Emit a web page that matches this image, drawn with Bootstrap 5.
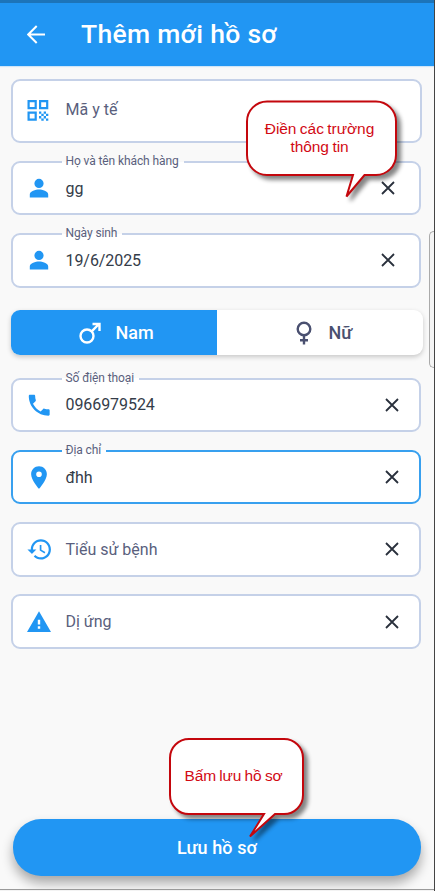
<!DOCTYPE html>
<html lang="vi">
<head>
<meta charset="utf-8">
<meta name="viewport" content="width=device-width, initial-scale=1">
<title>Thêm mới hồ sơ</title>
<link rel="stylesheet" href="https://cdn.jsdelivr.net/npm/bootstrap@5.3.0/dist/css/bootstrap.min.css">
<style>
:root{--blue:#2196f3;--line:#c5d1e8;--page:#f9f9f9;--muted-ink:#5a5f7d;--ink:#343c49}
body{font-family:Roboto,"Noto Sans",sans-serif;background:var(--page);margin:0}
.screen{width:435px;height:891px;border-right:1px solid #444;background:var(--page)}
.app-header{height:66px;background:var(--blue);border-top:3px solid #1c74b9;padding:0 0 1px 27px;box-shadow:0 1px 1px #cfe5f8}
.app-title{font-size:26.5px;font-weight:500;line-height:1;letter-spacing:.3px;margin-left:35px}
.form-area{padding:13px 14px 0 11px}
.field{height:54.5px;border:2px solid var(--line);border-radius:9px;background:#fff;margin-bottom:17.8px;padding-left:13.5px;padding-right:20px;width:409.5px;color:var(--ink);font-size:16px;letter-spacing:-.07px;line-height:20px}
.field span{padding-top:1px}
.field-code{height:64px;width:410.5px;padding-left:12.5px;padding-bottom:3px}
.field-code .field-icon{margin-right:16px}
.field-active{border-color:#38a0ef}
.field-empty{color:var(--muted-ink);letter-spacing:0}
.field-near{padding-right:24px}
.field-icon{width:24px;height:24px;fill:var(--blue);flex:none;margin-right:15px}
.field-label{position:absolute;left:48.5px;top:-9px;padding:0 5px 0 4px;font-size:12px;line-height:15px;letter-spacing:-.1px;color:var(--muted-ink);background:linear-gradient(var(--page) 50%,#fff 50%);white-space:nowrap}
.clear{width:14px;height:14px;stroke:#29303c;stroke-width:1.8;fill:none}
.gender{width:412px;height:45px;border-radius:9px;box-shadow:0 2px 5px rgba(0,0,0,.2);margin:22.5px 0;font-size:18px;font-weight:500;letter-spacing:0;background:#fff;color:#4a5070;overflow:hidden}
.gender-on{background:var(--blue);color:#fff}
.gender-half{width:206px;padding-left:3px}
.gender-half svg{width:26px;height:26px;fill:none;stroke:currentColor;stroke-width:2.4}
.save{position:absolute;left:13px;top:819px;width:408px;height:57px;border-radius:28px;background:var(--blue);color:#fff;font-size:18px;font-weight:500;letter-spacing:.1px;box-shadow:0 7px 12px rgba(0,0,0,.33)}
.save:hover{background:var(--blue);color:#fff}
.screen-foot{left:0;top:889px;width:435px;height:2px;background:#f3f3f3;border-top:1px solid #9a9a9a}
.side-tab{left:429px;top:231px;width:5px;height:137px;border:1px solid #aaa;border-right:0;border-radius:5px 0 0 5px;background:#f4f4f4}
.callout{color:#d20a14;font-family:"Liberation Sans",Arial,sans-serif;font-size:15.5px;line-height:18px;text-align:center;letter-spacing:-.05px;word-spacing:-.8px}
.callout svg{position:absolute;left:0;top:0;overflow:visible;fill:#fff;stroke:#c4070d;stroke-width:2;filter:drop-shadow(4px 4px 2px rgba(0,0,0,.48))}
.callout-fill{left:246px;top:100px;width:151px;height:98px;padding-top:20px;padding-right:4px}
.callout-save{left:169px;top:738px;width:135px;height:102px;padding-top:29px;padding-right:6px;letter-spacing:-.15px}
</style>
<script src="https://cdn.jsdelivr.net/npm/bootstrap@5.3.0/dist/js/bootstrap.bundle.min.js"></script>
</head>
<body>
<svg class="d-none">
<symbol id="person" viewBox="0 0 24 24"><path d="M12 12a4.6 4.6 0 1 0 0-9.2 4.6 4.6 0 0 0 0 9.2zm0 1.6c-3.3 0-9.2 1.6-9.2 4.8v3h18.4v-3c0-3.200-5.900-4.800-9.200-4.800z"/></symbol>
<symbol id="cross" viewBox="0 0 14 14"><path d="M1 1l12 12M13 1L1 13"/></symbol>
</svg>
<main class="screen position-relative overflow-hidden">
<header class="app-header d-flex align-items-center text-white">
<svg width="19" height="19" viewBox="0 0 19 19" fill="none" stroke="#fff" stroke-width="2"><path d="M18 9.500H1.500M9.700 1L1.200 9.500l8.500 8.500"/></svg>
<h1 class="app-title mb-0">Thêm mới hồ sơ</h1>
</header>
<form class="form-area">
<div class="field field-code field-empty d-flex align-items-center">
<svg class="field-icon" viewBox="0 0 24 24"><path fill-rule="evenodd" d="M1.500 2h9.300v9.300H1.500zM3.700 4.200v4.900h4.900V4.200zM13 2h9.300v9.300H13zM15.200 4.200v4.900h4.900V4.200zM1.500 13.500h9.300v9.300H1.500zM3.700 15.700v4.900h4.900v-4.900z"/><path d="M13 13.500h2.300v2.300H13zM17.700 13.500H20v2.300h-2.300zM15.300 15.800h2.400v2.300h-2.400zM20 15.800h2.300v2.300H20zM13 18.100h2.300v2.400H13zM17.700 18.100H20v2.400h-2.300zM15.300 20.500h2.400v2.300h-2.400zM20 20.500h2.300v2.300H20z"/></svg>
<span>Mã y tế</span>
</div>
<div class="field field-near position-relative d-flex align-items-center">
<label class="field-label">Họ và tên khách hàng</label>
<svg class="field-icon"><use href="#person"/></svg><span>gg</span>
<svg class="clear ms-auto"><use href="#cross"/></svg>
</div>
<div class="field field-near position-relative d-flex align-items-center">
<label class="field-label">Ngày sinh</label>
<svg class="field-icon"><use href="#person"/></svg><span>19/6/2025</span>
<svg class="clear ms-auto"><use href="#cross"/></svg>
</div>
<div class="gender d-flex">
<div class="gender-half gender-on d-flex align-items-center justify-content-center">
<svg class="me-2" viewBox="0 0 26 26"><circle cx="10" cy="16" r="6.500"/><path d="M14.700 11.300L22 4M15.500 4H22.500V11"/></svg><span class="ms-1">Nam</span>
</div>
<div class="gender-half d-flex align-items-center justify-content-center">
<svg class="me-2" viewBox="0 0 26 26"><circle cx="13" cy="9" r="6.300"/><path d="M13 15.300V24.500M9 20.300h8"/></svg><span class="ms-1">Nữ</span>
</div>
</div>
<div class="field position-relative d-flex align-items-center">
<label class="field-label">Số điện thoại</label>
<svg class="field-icon" viewBox="0 0 24 24"><g transform="translate(-1.700 -1.700) scale(1.160)"><path d="M6.620 10.790c1.440 2.830 3.760 5.140 6.590 6.590l2.200-2.200c.27-.27.670-.36 1.020-.24 1.120.37 2.330.57 3.570.57.550 0 1 .45 1 1V20c0 .55-.45 1-1 1-9.390 0-17-7.610-17-17 0-.55.450-1 1-1h3.500c.55 0 1 .45 1 1 0 1.250.2 2.450.570 3.570.110.350.030.740-.250 1.020l-2.200 2.200z"/></g></svg><span>0966979524</span>
<svg class="clear ms-auto"><use href="#cross"/></svg>
</div>
<div class="field field-active position-relative d-flex align-items-center">
<label class="field-label">Địa chỉ</label>
<svg class="field-icon" viewBox="0 0 24 24"><g transform="translate(-1.500 -.9) scale(1.125)"><path d="M12 2C8.130 2 5 5.130 5 9c0 5.250 7 13 7 13s7-7.750 7-13c0-3.870-3.130-7-7-7zm0 9.500a2.500 2.500 0 0 1 0-5 2.500 2.500 0 0 1 0 5z"/></g></svg><span>đhh</span>
<svg class="clear ms-auto"><use href="#cross"/></svg>
</div>
<div class="field field-empty position-relative d-flex align-items-center">
<svg class="field-icon" viewBox="0 0 24 24"><g transform="translate(-.7 -1) scale(1.120)"><path d="M13 3c-4.970 0-9 4.030-9 9H1l3.890 3.890.070.140L9 12H6c0-3.870 3.130-7 7-7s7 3.130 7 7-3.130 7-7 7c-1.930 0-3.680-.79-4.940-2.060l-1.420 1.420C8.270 19.990 10.510 21 13 21c4.970 0 9-4.030 9-9s-4.030-9-9-9zm-1 5v5l4.280 2.540.720-1.210-3.500-2.080V8H12z"/></g></svg><span>Tiểu sử bệnh</span>
<svg class="clear ms-auto"><use href="#cross"/></svg>
</div>
<div class="field field-empty position-relative d-flex align-items-center">
<svg class="field-icon" viewBox="0 0 24 24"><path d="M0 22h24L12 1.300zM13.200 18.700h-2.400v-2.400h2.400zM13.200 14.500h-2.400V9.700h2.400z" fill-rule="evenodd"/></svg><span>Dị ứng</span>
<svg class="clear ms-auto"><use href="#cross"/></svg>
</div>
<button type="button" class="save btn border-0 p-0">Lưu hồ sơ</button>
</form>
<div class="side-tab position-absolute"></div>
<div class="screen-foot position-absolute"></div>
<div class="callout callout-fill position-absolute">
<svg width="151" height="98"><path d="M21 1.500H130a20 20 0 0 1 20 20V55a20 20 0 0 1-20 20H118.500L100.500 96.500L107 75H21A20 20 0 0 1 1 55V21.500A20 20 0 0 1 21 1.500z"/></svg>
<div class="position-relative">Điền các trường<br>thông tin</div>
</div>
<div class="callout callout-save position-absolute">
<svg width="135" height="102"><path d="M20 1H115a19 19 0 0 1 19 19V57a19 19 0 0 1-19 19H106L81 98.500L95 76H20A19 19 0 0 1 1 57V20A19 19 0 0 1 20 1z"/></svg>
<div class="position-relative">Bấm lưu hồ sơ</div>
</div>
</main>
</body>
</html>
